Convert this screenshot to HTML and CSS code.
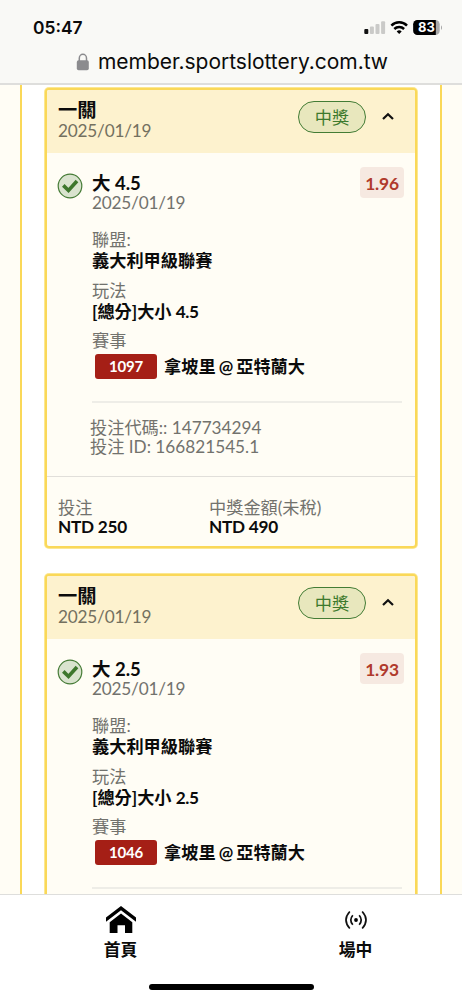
FILE: index.html
```html
<!DOCTYPE html>
<html lang="zh-Hant">
<head>
<meta charset="utf-8">
<meta name="viewport" content="width=device-width">
<title>member.sportslottery.com.tw</title>
<link rel="stylesheet" href="styles.css">
</head>
<body>
<header class="browser">
  <div class="status">
    <span class="time">05:47</span>
    <svg class="indicators" width="80" height="18" viewBox="362 19 80 18">
      <rect x="364.3" y="29" width="4" height="5" rx="1" fill="#111"/>
      <rect x="369.9" y="26.6" width="4" height="7.4" rx="1" fill="#cacac8"/>
      <rect x="375.5" y="24" width="4" height="10" rx="1" fill="#cacac8"/>
      <rect x="381.1" y="21.3" width="4" height="12.7" rx="1" fill="#cacac8"/>
      <g fill="none" stroke="#000" stroke-width="2.5">
        <path d="M391.4 25.6a10.8 10.8 0 0 1 15.6 0"/>
        <path d="M394.3 29a7 7 0 0 1 9.8 0"/>
      </g>
      <path d="M396.7 31.4a3.7 3.7 0 0 1 5 0L399.2 34z"/>
      <clipPath id="cell"><rect x="413.2" y="20" width="26.5" height="15" rx="4.3"/></clipPath>
      <g clip-path="url(#cell)"><rect x="413" y="20" width="27" height="15" fill="#aaa"/><rect x="413" y="20" width="22.8" height="15"/></g>
      <path d="M441 25.2q2.4 2.4 0 4.8z" fill="#aaa"/>
      <text class="charge" x="426.4" y="32.2" text-anchor="middle">83</text>
    </svg>
  </div>
  <div class="address">
    <svg width="14" height="18" viewBox="0 0 14 18"><path d="M3.3 8V5.2a3.6 3.9 0 0 1 7.2 0V8" fill="none" stroke="#8b8b8e" stroke-width="1.5"/><rect x=".8" y="7.3" width="12" height="10" rx="1.8" fill="#8b8b8e"/></svg>
    <span class="url">member.sportslottery.com.tw</span>
  </div>
</header>

<main class="viewport">
  <div class="panel">
    <article class="card">
      <div class="card-head">
        <div class="head-text"><h2 class="strong title">一關</h2><p class="muted date">2025/01/19</p></div>
        <span class="pill">中獎</span>
        <svg class="chevron" width="14" height="10" viewBox="0 0 14 10"><path d="M2 8l5-4.8L12 8" fill="none" stroke="#111" stroke-width="2.2"/></svg>
      </div>
      <div class="bet">
        <svg class="check" width="26" height="26" viewBox="0 0 26 26"><circle cx="13" cy="13" r="11.8" fill="#d9e3ce" stroke="#457b36" stroke-width="1.2"/><path d="M6.3 12.4l5.2 5.1L20 8" fill="none" stroke="#3d762c" stroke-width="3.6"/></svg>
        <div class="details">
          <h3 class="pick">大 4.5</h3>
          <p class="muted date">2025/01/19</p>
          <p class="muted league">聯盟:</p>
          <p class="strong value">義大利甲級聯賽</p>
          <p class="muted market">玩法</p>
          <p class="strong value">[總分]大小 <span class="line">4.5</span></p>
          <p class="muted event">賽事</p>
          <p class="match"><span class="code">1097</span><span class="strong teams">拿坡里 @ 亞特蘭大</span></p>
          <hr class="rule">
        </div>
        <span class="odds">1.96</span>
      </div>
      <div class="ids muted"><p>投注代碼:: 147734294</p><p>投注 ID: 166821545.1</p></div>
      <div class="totals">
        <div><p class="muted">投注</p><p class="strong amount">NTD 250</p></div>
        <div><p class="muted">中獎金額(未稅)</p><p class="strong amount">NTD 490</p></div>
      </div>
    </article>

    <article class="card">
      <div class="card-head">
        <div class="head-text"><h2 class="strong title">一關</h2><p class="muted date">2025/01/19</p></div>
        <span class="pill">中獎</span>
        <svg class="chevron" width="14" height="10" viewBox="0 0 14 10"><path d="M2 8l5-4.8L12 8" fill="none" stroke="#111" stroke-width="2.2"/></svg>
      </div>
      <div class="bet">
        <svg class="check" width="26" height="26" viewBox="0 0 26 26"><circle cx="13" cy="13" r="11.8" fill="#d9e3ce" stroke="#457b36" stroke-width="1.2"/><path d="M6.3 12.4l5.2 5.1L20 8" fill="none" stroke="#3d762c" stroke-width="3.6"/></svg>
        <div class="details">
          <h3 class="pick">大 2.5</h3>
          <p class="muted date">2025/01/19</p>
          <p class="muted league">聯盟:</p>
          <p class="strong value">義大利甲級聯賽</p>
          <p class="muted market">玩法</p>
          <p class="strong value">[總分]大小 <span class="line">2.5</span></p>
          <p class="muted event">賽事</p>
          <p class="match"><span class="code">1046</span><span class="strong teams">拿坡里 @ 亞特蘭大</span></p>
          <hr class="rule">
        </div>
        <span class="odds">1.93</span>
      </div>
    </article>
  </div>
</main>

<nav class="tabs">
  <div class="tab-row">
    <a class="tab"><svg width="30" height="28" viewBox="0 0 30 28"><path d="M0 11.5L15 0l15 11.5v4.2L15 4.2 0 15.7z"/><path d="M3.7 16.2L15 7.5l11.3 8.7V27H19v-7.7h-7.5V27H3.7z"/></svg><span>首頁</span></a>
    <a class="tab"><svg width="30" height="28" viewBox="0 0 30 28"><circle cx="15" cy="14" r="1.9"/><g fill="none" stroke="#111" stroke-width="1.7"><path d="M11.8 9.2Q7.8 14 11.8 18.8M18.2 9.2Q22.2 14 18.2 18.8M8.8 5.5Q1.2 14 8.8 22.5M21.2 5.5Q28.8 14 21.2 22.5"/></g></svg><span>場中</span></a>
  </div>
  <div class="home-bar"></div>
</nav>
</body>
</html>
```

FILE: styles.css
```css
* { box-sizing: border-box; }
body {
  margin: 0;
  width: 462px;
  height: 1000px;
  overflow: hidden;
  display: flex;
  flex-direction: column;
  background: #fff;
  color: #0b0b0b;
  font: 17.2px/20px Lato, "Noto Sans CJK TC", sans-serif;
}
h2, h3, p { margin: 0; font-size: inherit; white-space: nowrap; }

.browser {
  flex: none;
  height: 85px;
  background: #f9f9f6;
  border-bottom: 2px solid #dededc;
  font-family: Inter, sans-serif;
}
.status {
  display: flex;
  justify-content: space-between;
  padding: 19px 20px 0 33px;
  height: 48px;
}
.time { font-size: 17.4px; font-weight: 600; line-height: 18px; }
.charge { font: 700 13px Inter, sans-serif; fill: #fff; }
.address { display: flex; padding-left: 76px; gap: 8px; align-items: center; height: 28px; }
.url { font-size: 21px; line-height: 28px; letter-spacing: -0.03px; white-space: nowrap; }

.viewport { flex: 1; min-height: 0; overflow: hidden; background: #fffdf5; padding: 0 20px; }
.panel {
  height: 1000px;
  background: #fff;
  border: solid #fad858;
  border-width: 0 2px;
  padding: 3px 23px 0;
}
.card {
  height: 460px;
  margin-bottom: 26px;
  border: 2px solid #fad858;
  border-radius: 4px;
  box-shadow: 0 0 0 1px #fbe792;
  background: #fffdf5;
  overflow: hidden;
}
.card-head {
  display: flex;
  height: 63px;
  padding: 10px 20px 0 11px;
  background: #fdf2ce;
}
.head-text { flex: 1; }
.strong { font-weight: 700; }
.title { font-size: 19.3px; }
.muted { color: #72726d; }
.date { letter-spacing: -0.2px; }
.card-head .muted { color: #73705f; margin-top: 1px; }
.pill {
  width: 68px;
  height: 32px;
  margin-top: 1px;
  border: 1px solid #437c35;
  border-radius: 16px;
  background: #e8e7bd;
  color: #3d7a2d;
  text-align: center;
  line-height: 32px;
}
.chevron { margin: 11px 0 0 15px; }
.bet { display: flex; padding: 20px 11px 0 10px; }
.check { flex: none; }
.details { width: 310px; flex: none; margin-left: 9px; }
.pick { font-size: 18.5px; font-weight: 700; }
.league { margin-top: 17px; }
.value { margin-top: 1px; }
.line { letter-spacing: -0.4px; }
.market { margin-top: 10px; }
.event { margin-top: 9px; }
.match { display: flex; align-items: center; height: 25px; margin-top: 3px; padding-left: 3px; gap: 7px; }
.teams { word-spacing: -1.1px; padding-top: 1px; }
.code {
  width: 62px;
  height: 25px;
  border-radius: 3px;
  background: #a51f16;
  color: #fff;
  font-size: 15px;
  font-weight: 700;
  letter-spacing: -0.2px;
  line-height: 25px;
  text-align: center;
}
.rule { margin: 22px 0 0; border: 0; height: 2px; background: #eeede7; }
.odds {
  flex: none;
  width: 44px;
  height: 31px;
  margin: -6px 0 0 -42px;
  border-radius: 4px;
  background: #f6e9e1;
  color: #b03a2c;
  font-weight: 700;
  font-size: 17.4px;
  letter-spacing: -0.2px;
  line-height: 33px;
  text-align: center;
}
.ids { padding: 15px 0 0 43px; line-height: 19px; }
.totals {
  display: grid;
  grid-template-columns: 151px 1fr;
  margin-top: 20px;
  padding: 21px 11px 0;
  border-top: 1px solid #e1dfda;
}
.amount { margin-top: -1px; letter-spacing: -0.25px; }

.tabs { flex: none; height: 106px; background: #fff; border-top: 1px solid #dededc; }
.tab-row { display: grid; grid-template-columns: 235px 235px; margin-left: 3px; padding-top: 11px; }
.tab { display: flex; flex-direction: column; align-items: center; gap: 6px; font-weight: 600; font-size: 16.8px; }
.home-bar { width: 165px; height: 6px; margin: 24px auto 0; border-radius: 3px; background: #000; }
```
